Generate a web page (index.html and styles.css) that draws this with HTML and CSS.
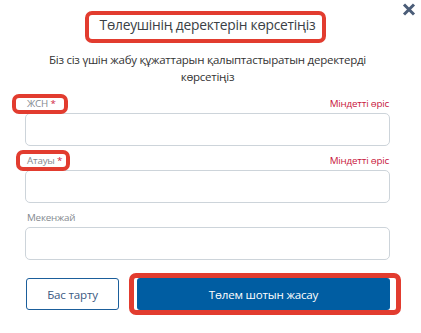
FILE: index.html
```html
<!DOCTYPE html>
<html lang="kk">
<head>
<meta charset="utf-8">
<link rel="stylesheet" href="styles.css">
</head>
<body>
<div class="modal">
  <button class="close" aria-label="close">
    <svg width="14" height="13" viewBox="0 0 14 13"><path d="M2 1.5 L12 11.5 M12 1.5 L2 11.5" stroke="#4b5d78" stroke-width="3" fill="none"/></svg>
  </button>
  <h1 class="title">Төлеушінің деректерін көрсетіңіз</h1>
  <p class="subtitle">Біз сіз үшін жабу құжаттарын қалыптастыратын деректерді көрсетіңіз</p>
  <div class="fields">
    <div class="field">
      <div class="label-row"><span class="label">ЖСН <span class="star">*</span></span><span class="req">Міндетті өріс</span></div>
      <div class="input"></div>
    </div>
    <div class="field">
      <div class="label-row"><span class="label">Атауы <span class="star">*</span></span><span class="req">Міндетті өріс</span></div>
      <div class="input"></div>
    </div>
    <div class="field">
      <div class="label-row"><span class="label">Мекенжай</span></div>
      <div class="input"></div>
    </div>
  </div>
  <div class="actions">
    <button class="btn btn-outline">Бас тарту</button>
    <button class="btn btn-primary">Төлем шотын жасау</button>
  </div>
  <div class="mark mark-title"></div>
  <div class="mark mark-iin"></div>
  <div class="mark mark-name"></div>
  <div class="mark mark-btn"></div>
</div>
</body>
</html>
```

FILE: styles.css
```css
html, body {
  margin: 0;
  padding: 0;
  background: #fff;
}
.modal {
  position: relative;
  width: 421px;
  height: 333px;
  box-sizing: border-box;
  padding: 14px 31px 0 25px;
  font-family: "Open Sans", "Noto Sans", sans-serif;
  color: #333;
}
.close {
  position: absolute;
  top: 3px;
  right: 5px;
  padding: 0;
  border: 0;
  background: none;
  width: 14px;
  height: 13px;
  line-height: 0;
}
.title {
  margin: 0;
  font-size: 13.8px;
  letter-spacing: -0.25px;
  line-height: 22px;
  font-weight: 400;
  text-align: center;
  color: #3a3f45;
}
.subtitle {
  margin: 15px 0 0;
  font-size: 11.5px;
  letter-spacing: -0.25px;
  line-height: 17px;
  text-align: center;
  color: #333;
}
.fields {
  margin-top: 10px;
  display: flex;
  flex-direction: column;
  gap: 6px;
}
.field {
  display: flex;
  flex-direction: column;
  gap: 2px;
}
.label-row {
  display: flex;
  justify-content: space-between;
  align-items: center;
  height: 16px;
  font-size: 9.8px;
  letter-spacing: -0.2px;
  padding: 0 1px 0 2px;
}
.label {
  color: #858a90;
}
.star {
  color: #d0263f;
}
.req {
  color: #c8163e;
}
.input {
  height: 31px;
  border: 1px solid #cdd4da;
  border-radius: 5px;
}
.actions {
  display: flex;
  gap: 18px;
  margin-top: 18px;
  padding-left: 1px;
}
.btn {
  height: 32px;
  font-family: "Open Sans", "Noto Sans", sans-serif;
  font-size: 11.6px;
  letter-spacing: -0.2px;
  border-radius: 3px;
  padding: 0;
}
.btn-outline {
  width: 93px;
  background: #fff;
  border: 1px solid #1b5e9b;
  color: #3b5a82;
}
.btn-primary {
  flex: 1;
  background: #005da2;
  border: 0;
  color: #fff;
}
.mark {
  position: absolute;
  box-sizing: border-box;
  border: 4px solid #e23c2f;
  border-radius: 7px;
}
.mark-title {
  left: 85px;
  top: 11px;
  width: 241px;
  height: 32px;
}
.mark-iin {
  left: 12px;
  top: 94px;
  width: 56px;
  height: 20px;
}
.mark-name {
  left: 16px;
  top: 150px;
  width: 54px;
  height: 21px;
}
.mark-btn {
  left: 129px;
  top: 273px;
  width: 272px;
  height: 42px;
  border-width: 5px;
}
```
